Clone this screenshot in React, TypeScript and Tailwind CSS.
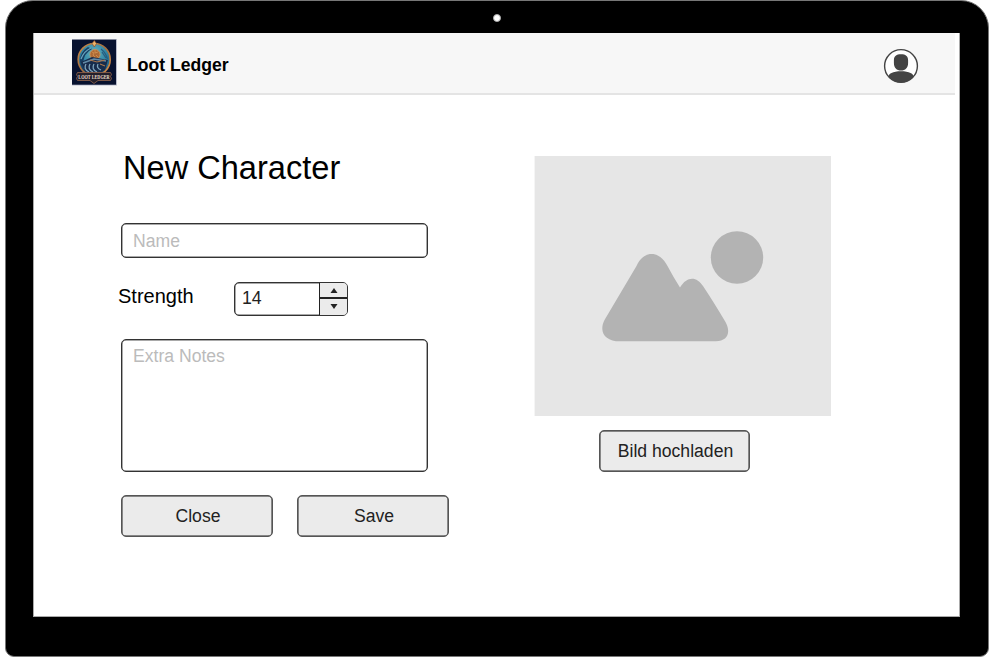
import type { ReactNode } from "react";

function Logo() {
  return (
    <svg viewBox="0 0 45 47" className="h-[47px] w-[45px] shrink-0" role="img" aria-label="Loot Ledger">
      <defs>
        <radialGradient id="sky" cx="50%" cy="30%" r="70%">
          <stop offset="0" stopColor="#6cb4bd" />
          <stop offset="0.55" stopColor="#2f86a6" />
          <stop offset="1" stopColor="#1a4a70" />
        </radialGradient>
        <linearGradient id="rim" x1="0" x2="1" y1="0" y2="1">
          <stop offset="0" stopColor="#c98b4b" />
          <stop offset="0.5" stopColor="#a56e3e" />
          <stop offset="1" stopColor="#d99048" />
        </linearGradient>
      </defs>
      <rect width="45" height="46.500" fill="#b9bccb" />
      <rect y="0.700" width="44" height="45" fill="#08122f" />
      <circle cx="22.200" cy="20.500" r="16" fill="url(#sky)" stroke="url(#rim)" strokeWidth="1.700" />
      <path d="M16 8 Q8 13 8 22 Q9 31 15 34 L11 24 Q12 14 20 10Z" fill="#173f63" />
      <path d="M9 20 Q12 12 19 9" fill="none" stroke="#6aa5bd" strokeWidth="1.300" />
      <path d="M29 10 Q34 14 35.500 20 M30 13l4 6" fill="none" stroke="#275e80" strokeWidth="1.300" />
      <circle cx="23" cy="15.500" r="5" fill="#ad6a35" stroke="#d59353" strokeWidth="0.800" />
      <path d="M20 13l2 1-1 2 2 2M23 11v3l3-1M24 16l2 2" fill="none" stroke="#d99b58" strokeWidth="0.700" />
      <path d="M9 23 L20 18 L36 21 L33 31 Q25 37 14 34Z" fill="#172c4c" />
      <path d="M11 24 L22 20 L34 22" fill="none" stroke="#628ba7" strokeWidth="1.500" />
      <path d="M14 25 Q11 30 17 33 M18 25 Q15 30 21 33 M22 25 Q19 30 25 33 M26 25 Q24 29 29 31" fill="none" stroke="#7fa5bd" strokeWidth="1.300" />
      <path d="M18 21l7 2 8-2M28 25l5 2" fill="none" stroke="#aa764b" strokeWidth="1.100" />
      <path d="M22.300 1.500l2.200 3-2.200 3.500-2.200-3.500z" fill="#edb569" stroke="#8a4b28" strokeWidth="0.700" />
      <path d="M5.500 33.500h33l1 2-1 2 1 2-1 2H26l-4 3-4-3H5.500l-1-2 1-2-1-2z" fill="#24202b" stroke="#96664c" strokeWidth="0.800" />
      <g transform="translate(22 40.300) scale(0.930 1.250)">
        <text textAnchor="middle" fill="#eadfce" fontFamily="Liberation Serif, serif" fontWeight="700" fontSize="4.600">LOOT LEDGER</text>
      </g>
    </svg>
  );
}

function Avatar() {
  return (
    <svg viewBox="0 0 36 36" className="h-9 w-9" aria-hidden="true">
      <defs>
        <clipPath id="face"><circle cx="18" cy="18" r="16.500" /></clipPath>
      </defs>
      <circle cx="18" cy="18" r="16.400" fill="#fff" />
      <g clipPath="url(#face)" fill="#444">
        <path d="M18 6.300c4.500 0 7.100 2 7.100 5.900v2.800c0 4.700-2.800 7.600-7.100 7.600s-7.100-2.900-7.100-7.600v-2.800c0-3.900 2.600-5.900 7.100-5.900z" />
        <path d="M5 36v-6.500c0-4 5-6.300 13-6.300s13 2.300 13 6.300V36z" />
      </g>
      <circle cx="18" cy="18" r="16.400" fill="none" stroke="#444" strokeWidth="1.400" />
    </svg>
  );
}

function Button({ children }: { children: ReactNode }) {
  return (
    <button className="flex h-[42px] w-full items-center justify-center rounded-[5px] border border-[#555] bg-[#ebebeb] pt-px pl-[2px] text-[17.6px] text-[#222] shadow-[inset_0_0_0_0.5px_#222]">
      {children}
    </button>
  );
}

function StrengthStepper() {
  return (
    <div className="mt-px flex h-[34px] w-[114px] overflow-hidden rounded-[5px] border border-[#333] shadow-[inset_0_0_0_0.5px_#555]">
      <input aria-label="Strength" defaultValue="14" className="h-[30px] w-[84px] pl-[7px] text-[17.7px] leading-[30px] text-[#222] outline-none" />
      <div className="flex flex-1 flex-col border-l border-[#222] bg-[#ebebeb]">
        <button aria-label="Increase" className="flex h-4 items-center justify-center border-b-2 border-[#222]">
          <svg viewBox="0 0 8 5" className="h-[5px] w-2"><path d="M4 0l3.500 5h-7z" fill="#222" /></svg>
        </button>
        <button aria-label="Decrease" className="flex flex-1 items-center justify-center pb-px">
          <svg viewBox="0 0 8 5" className="h-[5px] w-2"><path d="M.5 0h7L4 5z" fill="#222" /></svg>
        </button>
      </div>
    </div>
  );
}

export default function App() {
  return (
    <div className="h-[657px] w-[990px] overflow-hidden bg-white pl-[5px] font-['Liberation_Sans',Arial,sans-serif]">
      <div className="flex h-[657px] w-[984px] flex-col rounded-t-[28px] rounded-b-[9px] border border-[#777] bg-black pl-[27px]">
        <div className="flex h-[32px] shrink-0 items-center pr-[29px] pl-[460px]">
          <span className="mt-px h-2 w-2 rounded-full border border-[#aaa] bg-white" />
        </div>
        <div className="h-[584px] w-[927px] border border-t-0 border-[#aaa] bg-white">
          <header className="flex h-[62px] w-[921px] items-center justify-between border-b-2 border-[#e4e4e4] bg-[#f7f7f7] pr-[36px] pl-[38px]">
            <div className="flex items-center gap-[10px]">
              <div className="-mt-[2px]"><Logo /></div>
              <span className="pt-[5px] text-[17.6px] font-bold text-black">Loot Ledger</span>
            </div>
            <div className="pt-[5px]"><Avatar /></div>
          </header>
          <main className="flex items-start">
            <form className="ml-[87px] w-[328px] pt-[52px]" onSubmit={(event) => event.preventDefault()}>
              <h1 className="h-[40px] pt-px pl-[2px] text-[32.6px] leading-10 text-black">New Character</h1>
              <input aria-label="Name" placeholder="Name" className="mt-[36px] block h-[35px] w-[307px] rounded-[5px] border border-[#333] pt-[2px] pl-[11px] text-[17.6px] text-[#222] shadow-[inset_0_0_0_0.5px_#555] placeholder:text-[#bbb]" />
              <div className="-ml-[3px] mt-[23px] flex h-[34px]">
                <label className="w-[116px] pt-px text-[20px] leading-7 text-black">Strength</label>
                <StrengthStepper />
              </div>
              <textarea aria-label="Extra Notes" placeholder="Extra Notes" className="mt-[24px] block h-[133px] w-[307px] resize-none rounded-[5px] border border-[#333] pt-[6px] pl-[11px] text-[17.6px] leading-5 shadow-[inset_0_0_0_0.5px_#555] placeholder:text-[#bbb]" />
              <div className="mt-[23px] grid w-[328px] grid-cols-2 gap-6">
                <Button>Close</Button>
                <Button>Save</Button>
              </div>
            </form>
            <section className="ml-[85px] w-[297px] pt-[61px]">
              <svg viewBox="0 0 297 260" className="h-[260px] w-[297px]" aria-label="Image placeholder">
                <rect x="0.600" width="296.400" height="260" fill="#e6e6e6" />
                <g fill="#b3b3b3">
                  <circle cx="203" cy="101.500" r="26.200" />
                  <path d="M70.500 164 L102.500 110 C109.500 94 125.500 94 133.500 110 Q139 120.500 146 131.500 C153 119.500 163 120.500 169 130 Q179 145 191.500 166 C197.500 177 193 185.300 182 185.300 H86 C71 185.300 64.500 176 70.500 164Z" />
                </g>
              </svg>
              <div className="mt-[14px] ml-[65px] w-[151px]"><Button>Bild hochladen</Button></div>
            </section>
          </main>
        </div>
      </div>
    </div>
  );
}
